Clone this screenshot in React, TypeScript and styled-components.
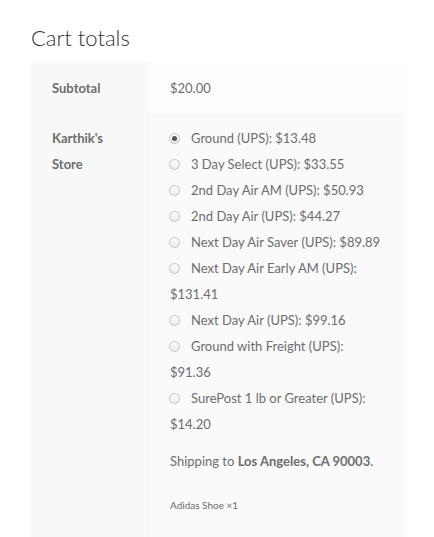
import React from "react";
import styled, { createGlobalStyle } from "styled-components";

const GlobalStyle = createGlobalStyle`
  html, body {
    margin: 0;
    padding: 0;
    background: #ffffff;
  }
  body {
    font-family: Lato, "Open Sans", "Liberation Sans", sans-serif;
    color: #6d6d6d;
  }
`;

const Page = styled.div`
  padding: 25px 29px 0 31px;
`;

const Title = styled.h2`
  margin: 0 0 12px;
  font-size: 22px;
  line-height: 26px;
  font-weight: 300;
  color: #333333;
`;

const Table = styled.table`
  width: 374px;
  border-collapse: collapse;
  border-spacing: 0;
`;

const Label = styled.th`
  width: 76px;
  padding: 12px 21px;
  background: #f8f8f8;
  text-align: left;
  vertical-align: top;
  font-size: 13px;
  line-height: 26px;
  font-weight: 700;
  color: #6d6d6d;
`;

const Cell = styled.td<{ $shade: string }>`
  padding: 12px 18px 12px 21px;
  background: ${(p) => p.$shade};
  vertical-align: top;
  font-size: 13px;
  line-height: 26px;
`;

const Methods = styled.ul`
  list-style: none;
  margin: 0;
  padding: 0;
`;

const Method = styled.li`
  margin: 0;
`;

const Radio = styled.span<{ $checked?: boolean }>`
  display: inline-block;
  position: relative;
  box-sizing: border-box;
  width: 11px;
  height: 11px;
  margin: 0 11px 0 -1px;
  vertical-align: -1px;
  border-radius: 50%;
  border: 1px solid #c4c4c4;
  background: linear-gradient(#ffffff, #e9e9e9);
  &::after {
    content: "";
    display: ${(p) => (p.$checked ? "block" : "none")};
    position: absolute;
    left: 2px;
    top: 2px;
    width: 5px;
    height: 5px;
    border-radius: 50%;
    background: #555555;
  }
`;

const Destination = styled.p`
  margin: 11px 0 0;
  strong {
    font-weight: 700;
  }
`;

const Package = styled.p`
  margin: 22px 0 0;
  font-size: 10px;
  line-height: 18px;
  padding-bottom: 30px;
`;

const rates = [
  { name: "Ground (UPS)", price: "$13.48", checked: true },
  { name: "3 Day Select (UPS)", price: "$33.55" },
  { name: "2nd Day Air AM (UPS)", price: "$50.93" },
  { name: "2nd Day Air (UPS)", price: "$44.27" },
  { name: "Next Day Air Saver (UPS)", price: "$89.89" },
  { name: "Next Day Air Early AM (UPS)", price: "$131.41" },
  { name: "Next Day Air (UPS)", price: "$99.16" },
  { name: "Ground with Freight (UPS)", price: "$91.36" },
  { name: "SurePost 1 lb or Greater (UPS)", price: "$14.20" },
];

export default function App() {
  return (
    <Page>
      <GlobalStyle />
      <Title>Cart totals</Title>
      <Table>
        <tbody>
          <tr>
            <Label>Subtotal</Label>
            <Cell $shade="#fdfdfd">$20.00</Cell>
          </tr>
          <tr>
            <Label>Karthik's Store</Label>
            <Cell $shade="#fafafa">
              <Methods>
                {rates.map((r) => (
                  <Method key={r.name}>
                    <Radio $checked={r.checked} />
                    {r.name}: {r.price}
                  </Method>
                ))}
              </Methods>
              <Destination>
                Shipping to <strong>Los Angeles, CA 90003</strong>.
              </Destination>
              <Package>Adidas Shoe ×1</Package>
            </Cell>
          </tr>
        </tbody>
      </Table>
    </Page>
  );
}
